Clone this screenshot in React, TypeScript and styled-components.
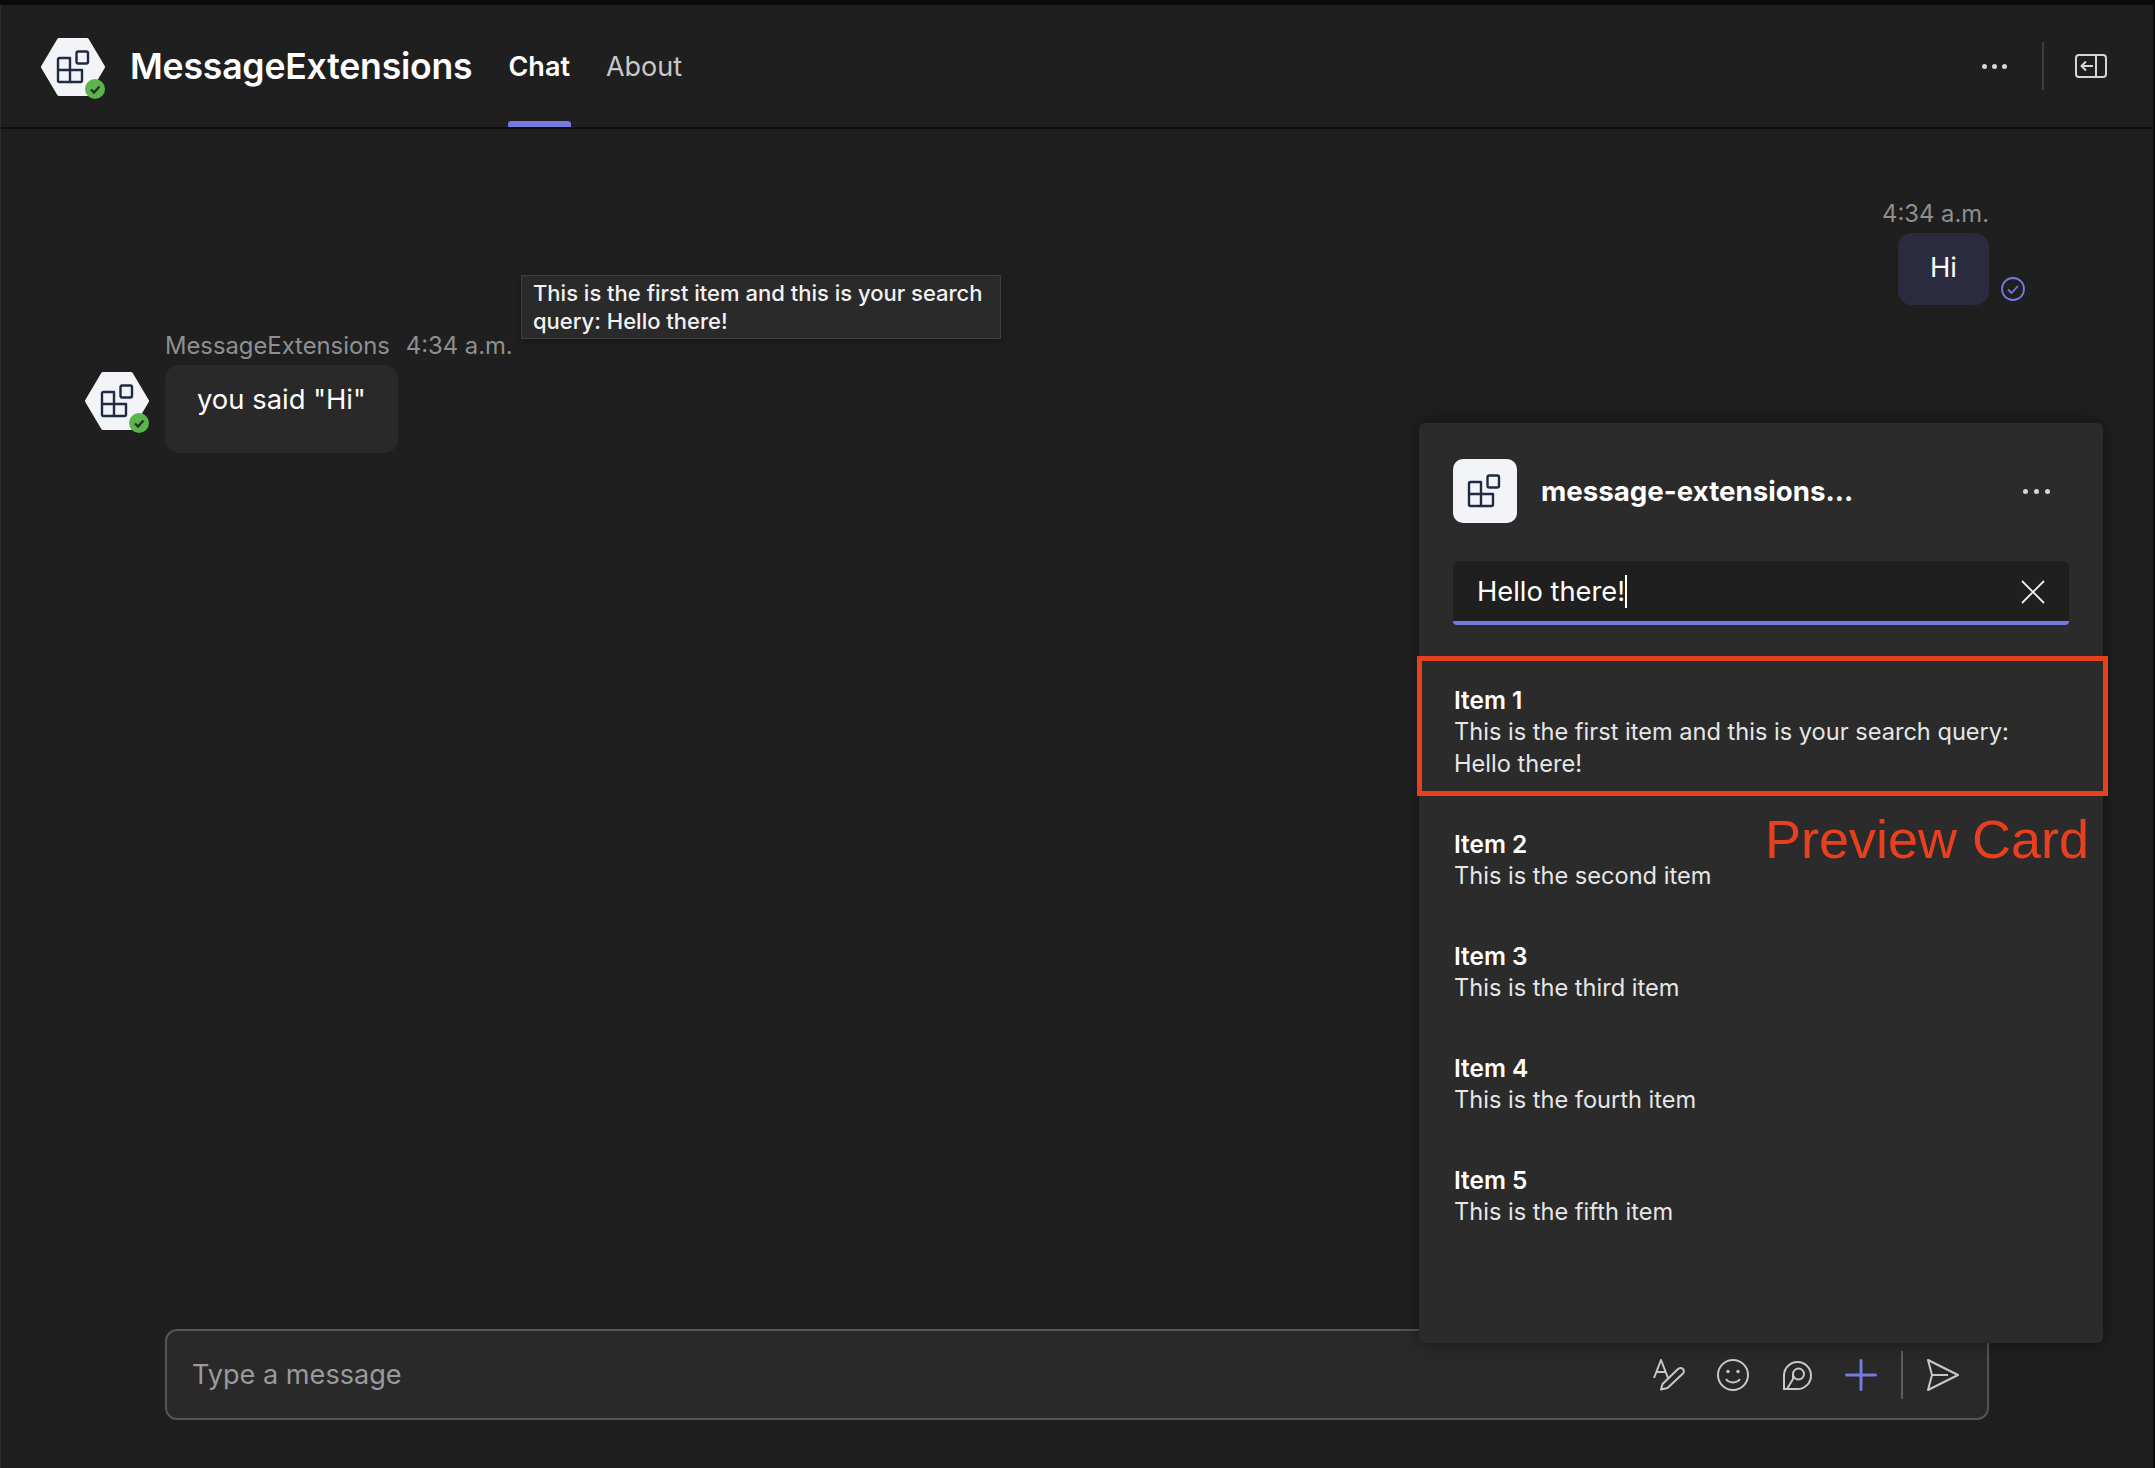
import React from "react";
import styled, { createGlobalStyle } from "styled-components";

const GlobalStyle = createGlobalStyle`
  html, body {
    margin: 0;
    padding: 0;
    background: #0a0a0a;
    font-family: Inter, "Noto Sans", "Liberation Sans", sans-serif;
  }
`;

const Screen = styled.div`
  width: 2155px;
  height: 1468px;
  padding: 5px 2px 0 0;
  box-sizing: border-box;
  background: #0a0a0a;
  overflow: hidden;
`;
const Frame = styled.div`
  position: relative;
  height: 100%;
  display: flex;
  flex-direction: column;
  background: #1f1f1f;
  border-left: 1px solid #2c2c2c;
  box-sizing: border-box;
`;
const Header = styled.header`
  height: 124px;
  flex-shrink: 0;
  display: flex;
  align-items: center;
  padding: 0 46px 0 40px;
  box-sizing: border-box;
  border-bottom: 2px solid #0f0f0f;
`;
const LogoSlot = styled.div`
  margin: 6px 25px 0 0;
  display: flex;
`;
const AppName = styled.h1`
  margin: 0 36px 0 0;
  font-size: 35.6px;
  font-weight: 600;
  color: #ffffff;
  letter-spacing: -0.2px;
`;
const Tab = styled.div<{ $active?: boolean }>`
  position: relative;
  height: 122px;
  margin-right: 36px;
  display: flex;
  align-items: center;
  font-size: 27px;
  font-weight: ${(p) => (p.$active ? 600 : 400)};
  color: ${(p) => (p.$active ? "#ffffff" : "#c8c8c8")};
  &::after {
    content: "";
    display: ${(p) => (p.$active ? "block" : "none")};
    position: absolute;
    left: 0;
    right: -1px;
    bottom: 0;
    height: 6px;
    border-radius: 3px 3px 0 0;
    background: #7579e0;
  }
`;
const HeaderActions = styled.div`
  margin-left: auto;
  display: flex;
  align-items: center;
`;
const DotRow = styled.div<{ $gap: number }>`
  display: flex;
  gap: ${(p) => p.$gap}px;
`;
const Dot = styled.span<{ $size: number }>`
  width: ${(p) => p.$size}px;
  height: ${(p) => p.$size}px;
  border-radius: 50%;
  background: #d6d6d6;
`;
const HeaderDivider = styled.div`
  width: 2px;
  height: 48px;
  margin: 0 31px 0 35px;
  background: #3d3d3d;
`;

const Thread = styled.main`
  flex: 1;
  display: flex;
  flex-direction: column;
  padding: 69px 128px 0 84px;
`;
const SentGroup = styled.div`
  display: flex;
  flex-direction: column;
  align-items: flex-end;
  padding-right: 36px;
  gap: 3px;
`;
const Meta = styled.div`
  display: flex;
  gap: 16px;
  font-size: 23.8px;
  line-height: 32px;
  color: #8f8f8f;
`;
const SentRow = styled.div`
  display: flex;
  align-items: flex-end;
  gap: 12px;
  margin-right: -36px;
`;
const Bubble = styled.div<{ $sent?: boolean }>`
  border-radius: 14px;
  font-size: 27.4px;
  line-height: 38px;
  color: #ffffff;
  padding: ${(p) => (p.$sent ? "15px 32px 19px" : "15px 32px 35px")};
  background: ${(p) => (p.$sent ? "#2b2b40" : "#292929")};
`;
const CheckSlot = styled.div`
  display: flex;
  margin-bottom: 4px;
`;
const ReceivedGroup = styled.div`
  display: flex;
  flex-direction: column;
  gap: 3px;
  margin-top: 25px;
  padding-left: 80px;
`;
const ReceivedRow = styled.div`
  display: flex;
  gap: 16px;
  margin-left: -80px;
`;
const AvatarSlot = styled.div`
  margin-top: 7px;
  display: flex;
`;

const Composer = styled.div`
  height: 91px;
  margin: 0 164px 48px 164px;
  flex-shrink: 0;
  display: flex;
  align-items: center;
  padding: 0 28px 0 25px;
  box-sizing: border-box;
  background: #292929;
  border: 2px solid #555555;
  border-radius: 12px;
`;
const Placeholder = styled.span`
  font-size: 27.1px;
  color: #9a9a9a;
`;
const ComposerTools = styled.div`
  margin-left: auto;
  display: flex;
  align-items: center;
  gap: 32px;
`;
const ToolDivider = styled.div`
  width: 2px;
  height: 48px;
  margin: 0 -8px 0 -8px;
  background: #5c5c5c;
`;

const Tooltip = styled.div`
  position: absolute;
  left: 520px;
  top: 270px;
  width: 480px;
  height: 64px;
  box-sizing: border-box;
  padding: 3px 9px 0 11px;
  background: #2a2a2a;
  border: 1px solid #3f3f3f;
  box-shadow: 0 2px 6px rgba(0, 0, 0, 0.35);
  font-size: 22px;
  font-weight: 500;
  line-height: 28px;
  color: #f2f2f2;
`;

const Panel = styled.section`
  position: absolute;
  top: 418px;
  right: 50px;
  width: 684px;
  height: 920px;
  box-sizing: border-box;
  padding: 36px 34px 0;
  background: #2b2b2b;
  border-radius: 6px;
  box-shadow: 0 0 18px rgba(0, 0, 0, 0.4);
`;
const PanelHead = styled.div`
  display: flex;
  align-items: center;
`;
const AppTile = styled.div`
  width: 64px;
  height: 64px;
  margin-right: 24px;
  display: flex;
  border-radius: 10px;
  background: #f2f4f8;
`;
const PanelTitle = styled.div`
  font-size: 27.7px;
  font-weight: 700;
  color: #ffffff;
`;
const PanelMenu = styled.div`
  margin: 0 19px 0 auto;
`;
const SearchBox = styled.div`
  height: 64px;
  margin-top: 38px;
  display: flex;
  align-items: center;
  padding: 0 24px;
  box-sizing: border-box;
  background: #1f1f1f;
  border-bottom: 4px solid #7579e0;
  border-radius: 6px 6px 4px 4px;
`;
const SearchText = styled.div`
  font-size: 27.3px;
  color: #ffffff;
  display: flex;
  align-items: center;
`;
const Caret = styled.span`
  width: 2px;
  height: 33px;
  background: #ffffff;
`;
const ClearSlot = styled.div`
  margin: 2px 0 0 auto;
  display: flex;
`;
const ItemList = styled.div`
  margin-top: 59px;
  display: flex;
  flex-direction: column;
  gap: 48px;
  padding-left: 1px;
`;
const Item = styled.div`
  font-size: 23.6px;
  line-height: 32px;
  color: #e6e6e6;
`;
const ItemTitle = styled.div`
  font-size: 24.4px;
  font-weight: 600;
  color: #ffffff;
`;

const RedBox = styled.div`
  position: absolute;
  left: 1416px;
  top: 651px;
  width: 691px;
  height: 140px;
  box-sizing: border-box;
  border: 5px solid #e8401f;
`;
const RedLabel = styled.div`
  position: absolute;
  left: 1764px;
  top: 804px;
  font-family: "Liberation Sans", Arial, sans-serif;
  font-size: 54px;
  line-height: 60px;
  color: #e8401f;
`;

const Glyph = () => (
  <g fill="none" stroke="#1f2a44" strokeWidth="2.4" strokeLinejoin="round">
    <path d="M18.5 20H29V44H18.5A1.5 1.5 0 0 1 17 42.5V21.5A1.5 1.5 0 0 1 18.5 20Z" />
    <path d="M17 32H41V42.5A1.5 1.5 0 0 1 39.5 44H29" />
    <rect x="35.5" y="13.5" width="11.5" height="12" rx="1.8" />
  </g>
);

const HexLogo = () => (
  <svg width="64" height="62" viewBox="0 0 64 62">
    <path
      d="M18 2H46L62 29L46 56H18L2 29Z"
      fill="#f2f4f8"
      stroke="#f2f4f8"
      strokeWidth="4"
      strokeLinejoin="round"
    />
    <Glyph />
    <circle cx="54" cy="51" r="10" fill="#5cb54c" />
    <path
      d="M50 51.5L53 54.5L58.5 48.5"
      fill="none"
      stroke="#26302a"
      strokeWidth="2.4"
    />
  </svg>
);

const TileGlyph = () => (
  <svg width="64" height="64" viewBox="1 -3 64 64">
    <Glyph />
  </svg>
);

const PaneIcon = () => (
  <svg width="32" height="24" viewBox="0 0 32 24" fill="none" stroke="#d6d6d6" strokeWidth="2">
    <rect x="1" y="1" width="30" height="22" rx="3" />
    <path d="M21 1V23" />
    <path d="M18 12H6.5M11 7.5L6.5 12L11 16.5" />
  </svg>
);

const SentCheck = () => (
  <svg width="24" height="24" viewBox="0 0 24 24" fill="none" stroke="#7579e0" strokeWidth="1.8">
    <circle cx="12" cy="12" r="11" />
    <path d="M7 12.5L10.5 16L17 9" />
  </svg>
);

const ClearIcon = () => (
  <svg width="24" height="24" viewBox="0 0 24 24" fill="none" stroke="#f0f0f0" strokeWidth="1.8">
    <path d="M1 1L23 23M23 1L1 23" />
  </svg>
);

const FormatIcon = () => (
  <svg width="32" height="32" viewBox="0 0 32 32" fill="none" stroke="#c8c8c8" strokeWidth="2" strokeLinejoin="round">
    <path d="M1 19L8 1L15 19M3.5 13H12.5" />
    <path d="M8 30.5L9.5 25L25 10A3 3 0 0 1 30 14.5L14.5 29Z" />
  </svg>
);

const EmojiIcon = () => (
  <svg width="32" height="32" viewBox="0 0 32 32" fill="none" stroke="#c8c8c8" strokeWidth="2">
    <circle cx="16" cy="16" r="15" />
    <circle cx="11" cy="12.5" r="1.7" fill="#c8c8c8" stroke="none" />
    <circle cx="21" cy="12.5" r="1.7" fill="#c8c8c8" stroke="none" />
    <path d="M9 20C12 24.5 20 24.5 23 20" />
  </svg>
);

const LoopIcon = () => (
  <svg width="32" height="32" viewBox="0 0 32 32" fill="none" stroke="#c8c8c8" strokeWidth="2">
    <path d="M3 30V16A13.5 13.5 0 1 1 16.5 30Z" />
    <circle cx="17.5" cy="15" r="5.5" />
    <path d="M12 15V20L6 30" />
  </svg>
);

const PlusIcon = () => (
  <svg width="32" height="32" viewBox="0 0 32 32" fill="none" stroke="#7579e0" strokeWidth="3" strokeLinecap="round">
    <path d="M16 1.5V30.5M1.5 16H30.5" />
  </svg>
);

const SendIcon = () => (
  <svg width="32" height="32" viewBox="0 0 32 32" fill="none" stroke="#c8c8c8" strokeWidth="2" strokeLinejoin="round">
    <path d="M1 1L31 16L1 31L5 16Z" />
    <path d="M5 16H21" />
  </svg>
);

const Dots = ({ size, gap }: { size: number; gap: number }) => (
  <DotRow $gap={gap}>
    <Dot $size={size} />
    <Dot $size={size} />
    <Dot $size={size} />
  </DotRow>
);

const items = [
  { title: "Item 1", lines: ["This is the first item and this is your search query:", "Hello there!"] },
  { title: "Item 2", lines: ["This is the second item"] },
  { title: "Item 3", lines: ["This is the third item"] },
  { title: "Item 4", lines: ["This is the fourth item"] },
  { title: "Item 5", lines: ["This is the fifth item"] },
];

export default function App() {
  return (
    <Screen>
      <GlobalStyle />
      <Frame>
        <Header>
          <LogoSlot>
            <HexLogo />
          </LogoSlot>
          <AppName>MessageExtensions</AppName>
          <Tab $active>Chat</Tab>
          <Tab>About</Tab>
          <HeaderActions>
            <Dots size={5} gap={5} />
            <HeaderDivider />
            <PaneIcon />
          </HeaderActions>
        </Header>

        <Thread>
          <SentGroup>
            <Meta>4:34 a.m.</Meta>
            <SentRow>
              <Bubble $sent>Hi</Bubble>
              <CheckSlot>
                <SentCheck />
              </CheckSlot>
            </SentRow>
          </SentGroup>
          <ReceivedGroup>
            <Meta>
              <span>MessageExtensions</span>
              <span>4:34 a.m.</span>
            </Meta>
            <ReceivedRow>
              <AvatarSlot>
                <HexLogo />
              </AvatarSlot>
              <Bubble>you said "Hi"</Bubble>
            </ReceivedRow>
          </ReceivedGroup>
        </Thread>

        <Composer>
          <Placeholder>Type a message</Placeholder>
          <ComposerTools>
            <FormatIcon />
            <EmojiIcon />
            <LoopIcon />
            <PlusIcon />
            <ToolDivider />
            <SendIcon />
          </ComposerTools>
        </Composer>

        <Tooltip>
          This is the first item and this is your search
          <br />
          query: Hello there!
        </Tooltip>

        <Panel>
          <PanelHead>
            <AppTile>
              <TileGlyph />
            </AppTile>
            <PanelTitle>message-extensions...</PanelTitle>
            <PanelMenu>
              <Dots size={5} gap={6} />
            </PanelMenu>
          </PanelHead>
          <SearchBox>
            <SearchText>
              Hello there!
              <Caret />
            </SearchText>
            <ClearSlot>
              <ClearIcon />
            </ClearSlot>
          </SearchBox>
          <ItemList>
            {items.map((item) => (
              <Item key={item.title}>
                <ItemTitle>{item.title}</ItemTitle>
                {item.lines.map((line) => (
                  <div key={line}>{line}</div>
                ))}
              </Item>
            ))}
          </ItemList>
        </Panel>

        <RedBox />
        <RedLabel>Preview Card</RedLabel>
      </Frame>
    </Screen>
  );
}
